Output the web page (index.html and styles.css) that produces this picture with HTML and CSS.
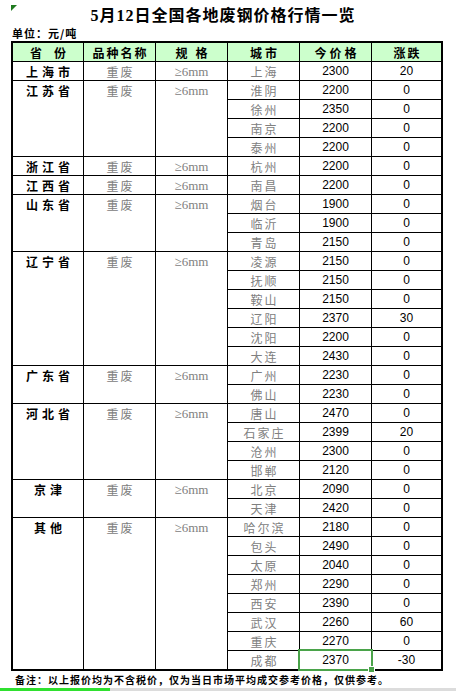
FILE: index.html
```html
<!DOCTYPE html>
<html lang="zh-CN">
<head>
<meta charset="utf-8">
<title>5月12日全国各地废钢价格行情一览</title>
<link rel="stylesheet" href="styles.css">
</head>
<body>
<div class="sheet">
  <span class="flag"></span>
  <div class="title">5月12日全国各地废钢价格行情一览</div>
  <div class="unit">单位：元/吨</div>
  <table class="grid">
    <colgroup>
      <col class="c1"><col class="c2"><col class="c3"><col class="c4"><col class="c5"><col class="c6">
    </colgroup>
    <thead>
      <tr><th class="hw">省份</th><th class="hn">品种名称</th><th class="hm">规格</th><th>城市</th><th>今价格</th><th class="hn">涨跌</th></tr>
    </thead>
    <tbody>
      <tr><td class="prov">上海市</td><td class="kind">重废</td><td class="spec">≥6mm</td><td class="city">上海</td><td class="num">2300</td><td class="num">20</td></tr>

      <tr><td class="prov" rowspan="4">江苏省</td><td class="kind" rowspan="4">重废</td><td class="spec" rowspan="4">≥6mm</td><td class="city">淮阴</td><td class="num">2200</td><td class="num">0</td></tr>
      <tr><td class="city">徐州</td><td class="num">2350</td><td class="num">0</td></tr>
      <tr><td class="city">南京</td><td class="num">2200</td><td class="num">0</td></tr>
      <tr><td class="city">泰州</td><td class="num">2200</td><td class="num">0</td></tr>

      <tr><td class="prov">浙江省</td><td class="kind">重废</td><td class="spec">≥6mm</td><td class="city">杭州</td><td class="num">2200</td><td class="num">0</td></tr>
      <tr><td class="prov">江西省</td><td class="kind">重废</td><td class="spec">≥6mm</td><td class="city">南昌</td><td class="num">2200</td><td class="num">0</td></tr>

      <tr><td class="prov" rowspan="3">山东省</td><td class="kind" rowspan="3">重废</td><td class="spec" rowspan="3">≥6mm</td><td class="city">烟台</td><td class="num">1900</td><td class="num">0</td></tr>
      <tr><td class="city">临沂</td><td class="num">1900</td><td class="num">0</td></tr>
      <tr><td class="city">青岛</td><td class="num">2150</td><td class="num">0</td></tr>

      <tr><td class="prov" rowspan="6">辽宁省</td><td class="kind" rowspan="6">重废</td><td class="spec" rowspan="6">≥6mm</td><td class="city">凌源</td><td class="num">2150</td><td class="num">0</td></tr>
      <tr><td class="city">抚顺</td><td class="num">2150</td><td class="num">0</td></tr>
      <tr><td class="city">鞍山</td><td class="num">2150</td><td class="num">0</td></tr>
      <tr><td class="city">辽阳</td><td class="num">2370</td><td class="num">30</td></tr>
      <tr><td class="city">沈阳</td><td class="num">2200</td><td class="num">0</td></tr>
      <tr><td class="city">大连</td><td class="num">2430</td><td class="num">0</td></tr>

      <tr><td class="prov" rowspan="2">广东省</td><td class="kind" rowspan="2">重废</td><td class="spec" rowspan="2">≥6mm</td><td class="city">广州</td><td class="num">2230</td><td class="num">0</td></tr>
      <tr><td class="city">佛山</td><td class="num">2230</td><td class="num">0</td></tr>

      <tr><td class="prov" rowspan="4">河北省</td><td class="kind" rowspan="4">重废</td><td class="spec" rowspan="4">≥6mm</td><td class="city">唐山</td><td class="num">2470</td><td class="num">0</td></tr>
      <tr><td class="city">石家庄</td><td class="num">2399</td><td class="num">20</td></tr>
      <tr><td class="city">沧州</td><td class="num">2300</td><td class="num">0</td></tr>
      <tr><td class="city">邯郸</td><td class="num">2120</td><td class="num">0</td></tr>

      <tr><td class="prov" rowspan="2">京津</td><td class="kind" rowspan="2">重废</td><td class="spec" rowspan="2">≥6mm</td><td class="city">北京</td><td class="num">2090</td><td class="num">0</td></tr>
      <tr><td class="city">天津</td><td class="num">2420</td><td class="num">0</td></tr>

      <tr><td class="prov last" rowspan="8">其他</td><td class="kind last" rowspan="8">重废</td><td class="spec last" rowspan="8">≥6mm</td><td class="city">哈尔滨</td><td class="num">2180</td><td class="num">0</td></tr>
      <tr><td class="city">包头</td><td class="num">2490</td><td class="num">0</td></tr>
      <tr><td class="city">太原</td><td class="num">2040</td><td class="num">0</td></tr>
      <tr><td class="city">郑州</td><td class="num">2290</td><td class="num">0</td></tr>
      <tr><td class="city">西安</td><td class="num">2390</td><td class="num">0</td></tr>
      <tr><td class="city">武汉</td><td class="num">2260</td><td class="num">60</td></tr>
      <tr><td class="city">重庆</td><td class="num">2270</td><td class="num">0</td></tr>
      <tr><td class="city last">成都</td><td class="num last sel">2370<span class="sel-box"></span><span class="sel-handle"></span></td><td class="num last">-30</td></tr>
    </tbody>
  </table>
  <div class="note">备注：以上报价均为不含税价，仅为当日市场平均成交参考价格，仅供参考。</div>
  <div class="bar"><span class="bar-on"></span><span class="bar-off"></span></div>
</div>
</body>
</html>
```

FILE: styles.css
```css
html, body {
  margin: 0;
  padding: 0;
  background: #fff;
}

body {
  width: 456px;
  height: 691px;
  overflow: hidden;
  font-family: "Noto Sans CJK SC", sans-serif;
  color: #000;
}

.sheet {
  position: relative;
  display: flex;
  flex-direction: column;
  height: 691px;
}

.flag {
  position: absolute;
  left: 11px;
  top: 5px;
  width: 0;
  height: 0;
  border-top: 6px solid #1f7a1f;
  border-right: 6px solid transparent;
}

.title {
  margin-top: 5px;
  height: 22px;
  line-height: 22px;
  text-align: center;
  padding-right: 10px;
  font-family: "Liberation Serif", "Noto Sans CJK SC", serif;
  font-size: 16px;
  font-weight: bold;
  letter-spacing: 1px;
}

.unit {
  height: 13px;
  line-height: 13px;
  padding-left: 12px;
  font-size: 11px;
  font-weight: bold;
  letter-spacing: 1px;
}

.grid {
  margin: 1px 0 0 11px;
  width: 432px;
  border: 2px solid #000;
  border-collapse: separate;
  border-spacing: 0;
  table-layout: fixed;
}

.c1 { width: 71px; }
.c2 { width: 72px; }
.c3 { width: 72px; }
.c4 { width: 72px; }
.c5 { width: 72px; }
.c6 { width: 69px; }

.grid th,
.grid td {
  border-right: 1px solid #000;
  border-bottom: 1px solid #000;
  padding: 1px 0 0 0;
  height: 17px;
  line-height: 17px;
  text-align: center;
  white-space: nowrap;
  overflow: hidden;
  font-size: 12px;
}

.grid tr > :last-child {
  border-right: 0;
}

.grid td.last {
  border-bottom: 0;
}

.grid th {
  background: #ccffcc;
  font-weight: bold;
  letter-spacing: 3px;
  padding-left: 3px;
}

.grid th.hw {
  letter-spacing: 12px;
  padding-left: 12px;
}

.grid th.hm {
  letter-spacing: 8px;
  padding-left: 8px;
}

.grid th.hn {
  letter-spacing: 2px;
  padding-left: 2px;
}

.grid td.prov {
  font-weight: bold;
  letter-spacing: 4px;
  padding-left: 4px;
  vertical-align: top;
}

.grid td.kind {
  color: #808080;
  letter-spacing: 2px;
  padding-left: 2px;
  vertical-align: top;
}

.grid td.spec {
  color: #808080;
  font-family: "Liberation Serif", serif;
  font-size: 13px;
  vertical-align: top;
}

.grid td.city {
  color: #808080;
  letter-spacing: 2px;
  padding-left: 2px;
}

.grid td.num {
  font-family: "Liberation Sans", Arial, sans-serif;
  font-size: 12px;
}

.grid td.sel {
  position: relative;
  overflow: visible;
}

.sel-box {
  position: absolute;
  left: -2px;
  top: -2px;
  right: -2px;
  bottom: -2px;
  border: 2px solid #4aa34a;
}

.sel-handle {
  position: absolute;
  right: -4px;
  bottom: -4px;
  width: 5px;
  height: 5px;
  background: #4aa34a;
  border: 1px solid #fff;
}

.note {
  margin-top: 2px;
  height: 14px;
  line-height: 14px;
  padding-left: 15px;
  font-size: 10px;
  font-weight: bold;
  letter-spacing: 1px;
  white-space: nowrap;
}

.bar {
  margin-top: auto;
  height: 3px;
  display: flex;
}

.bar-on {
  width: 110px;
  background: #2fe02f;
}

.bar-off {
  flex: 1;
  background: #dcdcdc;
}
```
